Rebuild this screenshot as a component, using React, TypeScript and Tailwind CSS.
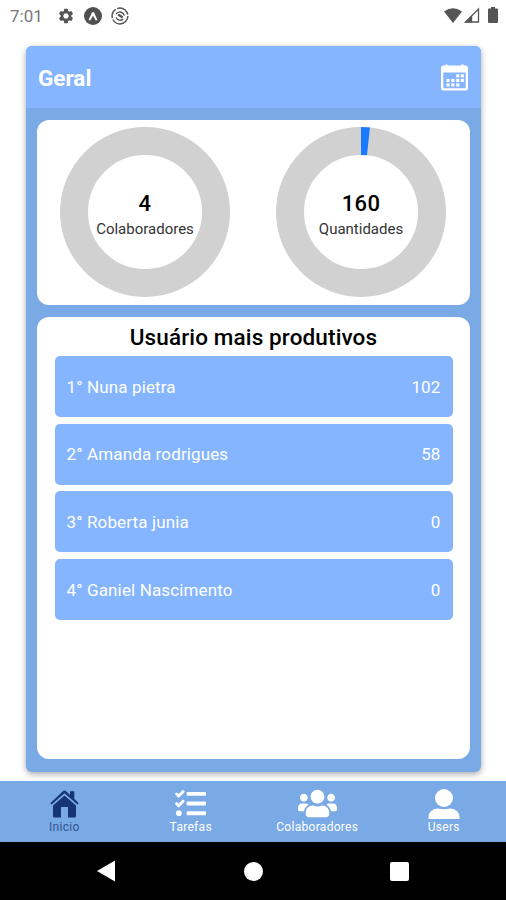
import { FaTasks, FaUsers } from "react-icons/fa";
import { MdSettings } from "react-icons/md";

interface DonutProps {
  value: number;
  label: string;
  percent: number;
}

const ranking = [
  { name: "Nuna pietra", total: 102 },
  { name: "Amanda rodrigues", total: 58 },
  { name: "Roberta junia", total: 0 },
  { name: "Ganiel Nascimento", total: 0 },
];

function StatusBar() {
  return (
    <div className="flex h-[46px] items-start justify-between pl-[10px] pr-[8px] text-[#555]">
      <div className="flex h-8 items-center">
        <span className="w-[47px] pt-px text-[17px] text-[#777]">7:01</span>
        <MdSettings className="h-[18px] w-[18px]" />
        <svg className="ml-[9px] h-[18px] w-[18px]" viewBox="0 0 18 18">
          <circle cx="9" cy="9" r="9" fill="#505050" />
          <path d="M4.6 13 8 5.2h2L13.4 13l-1.6.4L9 8.7l-2.8 4.7z" fill="#fff" />
        </svg>
        <svg className="ml-[9px] h-[18px] w-[18px]" viewBox="0 0 18 18" fill="none" stroke="#555">
          <circle cx="9" cy="9" r="7.9" strokeWidth="1.5" strokeDasharray="21 1.5 10 1.5 14 1.6" />
          <path d="M5 7.2c2-3.4 6.8-3 8.3 1.3M5 10.5c1.3 3 5.2 3.6 7 1.5" strokeWidth="1.4" />
          <path d="m7.2 7.6 4.4 3" strokeWidth="2.4" />
        </svg>
      </div>
      <div className="flex h-[30px] items-center">
        <svg className="h-[15px] w-[18px]" viewBox="0 0 18 15" fill="#555">
          <path d="M9 15 0 3.5Q9-3.2 18 3.5z" />
        </svg>
        <svg className="ml-[2px] h-[16px] w-[16px]" viewBox="0 0 16 16">
          <path d="M1.5 15 14.5 2v13z" fill="none" stroke="#555" strokeWidth="1.3" />
          <path d="M1 15.5 8.2 8.2v7.3z" fill="#555" />
        </svg>
        <svg className="ml-[8px] h-[16px] w-[10px]" viewBox="0 0 10 16" fill="#555">
          <path d="M3 0h4v1.6h2q1 0 1 1V15q0 1-1 1H1q-1 0-1-1V2.6q0-1 1-1h2z" />
        </svg>
      </div>
    </div>
  );
}

function CalendarIcon() {
  const dots = [
    [15.2, 10.3], [19.8, 10.3],
    [5.5, 14.9], [10.3, 14.9], [15.2, 14.9], [19.8, 14.9],
    [5.5, 19.4], [10.3, 19.4], [15.2, 19.4],
  ];

  return (
    <svg className="h-[27px] w-[27px]" viewBox="0 0 27 27" fill="#fff">
      <path
        fillRule="evenodd"
        d="M2.5 1.5H4Q5.5-.8 7 1.5h13q1.5-2.3 3 0h1.5Q27 1.5 27 4v20q0 2.5-2.5 2.5h-22Q0 26.5 0 24V4q0-2.5 2.5-2.5zM2.3 8.5V23q0 1.2 1.2 1.2h20q1.2 0 1.2-1.2V8.5z"
      />
      {dots.map(([x, y]) => (
        <rect key={`${x}-${y}`} x={x} y={y} width="3.1" height="3.1" />
      ))}
    </svg>
  );
}

function HomeIcon() {
  return (
    <svg className="h-[28px] w-[29px]" viewBox="0 0 29 28" fill="#153575">
      <path d="M14.5 5.5 26 15.5V26q0 1.5-1.5 1.5H18V17h-7v10.5H4.5Q3 27.5 3 26V15.5z" />
      <path d="M.3 13.2 12.9 1.3q1.6-1.5 3.2 0L20 4.9V1.2h4.3v7.6l4.4 4.4-1.3 1.4L14.5 3.3 1.6 14.6z" />
    </svg>
  );
}

function UserIcon() {
  return (
    <svg className="h-[30px] w-[32px]" viewBox="0 0 32 30" fill="#fff">
      <circle cx="16" cy="9" r="9" />
      <path d="M.5 30v-1.5c0-5.5 4-9 9.5-9q6 1.5 12 0c5.5 0 9.5 3.5 9.5 9V30z" />
    </svg>
  );
}

function Donut({ value, label, percent }: DonutProps) {
  const circumference = 2 * Math.PI * 71;

  return (
    <div className="relative h-[170px] w-[170px]">
      <svg className="h-full w-full" viewBox="0 0 170 170" fill="none" strokeWidth="28">
        <circle cx="85" cy="85" r="71" stroke="#d1d1d1" />
        {percent > 0 && (
          <circle
            cx="85"
            cy="85"
            r="71"
            stroke="#177aff"
            strokeDasharray={`${(circumference * percent) / 100} ${circumference}`}
            transform="rotate(-90 85 85)"
          />
        )}
      </svg>
      <div className="absolute inset-0 flex flex-col items-center pt-[63px]">
        <span className="text-[22px] font-medium leading-7 tracking-[0.3px] text-black">{value}</span>
        <span className="text-[15px] leading-[22px] text-[#333]">{label}</span>
      </div>
    </div>
  );
}

function TabBar() {
  const tabs = [
    { label: "Inicio", icon: <HomeIcon />, active: true },
    { label: "Tarefas", icon: <FaTasks className="h-[31px] w-[31px]" /> },
    { label: "Colaboradores", icon: <FaUsers className="h-[39px] w-[39px]" /> },
    { label: "Users", icon: <UserIcon /> },
  ];

  return (
    <nav className="-mr-px grid h-[61px] grid-cols-4 bg-[#79aae6] pl-px text-white">
      {tabs.map((tab) => (
        <div key={tab.label} className="flex flex-col items-center pt-[7px]">
          <div className="flex h-[31px] items-center justify-center">{tab.icon}</div>
          <span
            className={`text-[12px] leading-4 tracking-[0.3px] ${tab.active ? "text-[#35558c]" : ""}`}
          >
            {tab.label}
          </span>
        </div>
      ))}
    </nav>
  );
}

export default function App() {
  return (
    <div className="flex h-[900px] w-[506px] flex-col overflow-hidden bg-white font-['Roboto',sans-serif]">
      <StatusBar />

      <main className="ml-[26px] flex h-[726px] w-[455px] flex-col overflow-hidden rounded-md bg-[#79aae6] shadow-[0_2px_6px_rgba(0,0,0,0.35)]">
        <header className="flex h-[62px] items-center justify-between bg-[#85b5ff] pl-3 pr-[13px]">
          <h1 className="pt-[3px] text-[22.5px] font-bold text-white">Geral</h1>
          <CalendarIcon />
        </header>

        <div className="flex flex-1 flex-col gap-3 px-[11px] pb-[13px] pt-3">
          <section className="flex h-[185px] gap-[46px] rounded-xl bg-white pl-[23px] pt-[7px]">
            <Donut value={4} label="Colaboradores" percent={0} />
            <Donut value={160} label="Quantidades" percent={1.7} />
          </section>

          <section className="flex-1 rounded-xl bg-white px-[17.5px] pt-[5px]">
            <h2 className="text-center text-[22.5px] font-medium leading-[30px] tracking-[0.13px] text-black">
              Usuário mais produtivos
            </h2>
            <ul className="mt-[4px] flex flex-col gap-[6.3px]">
              {ranking.map((user, index) => (
                <li
                  key={user.name}
                  className="flex h-[61.3px] items-center justify-between rounded-[5px] bg-[#85b5ff] px-3 pt-[2px] text-[17px] tracking-[0.13px] text-white"
                >
                  <span>
                    {index + 1}° {user.name}
                  </span>
                  <span>{user.total}</span>
                </li>
              ))}
            </ul>
          </section>
        </div>
      </main>

      <div className="mt-[9px]">
        <TabBar />
      </div>

      <div className="flex flex-1 items-center bg-black pl-[97px]">
        <svg className="h-[22px] w-[18px]" viewBox="0 0 18 22" fill="#fff">
          <path d="M0 11 18 .5v21z" />
        </svg>
        <div className="ml-[129px] h-[19px] w-[19px] rounded-full bg-white" />
        <div className="ml-[127px] h-[19px] w-[19px] rounded-[2px] bg-white" />
      </div>
    </div>
  );
}
